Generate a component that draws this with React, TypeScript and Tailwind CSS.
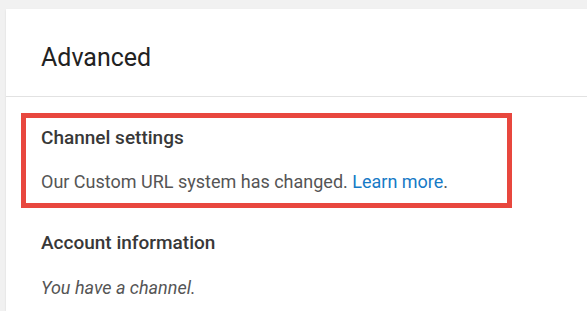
const App: React.FC = () => {
    return (
        <div className="min-h-[311px] w-[587px] overflow-hidden bg-[#f1f1f1] pl-[6px] pt-[9px] font-['Roboto',sans-serif]">
            <div className="min-h-[302px] w-[600px] bg-white shadow-[0_1px_2px_rgba(0,0,0,0.1)]">
                <div className="flex h-[88px] items-center border-b border-[#e2e2e2] pl-[35px] pt-[9px]">
                    <h1 className="text-[25px] font-normal leading-none text-[#222]">Advanced</h1>
                </div>
                <div className="pl-[15px] pt-[16px]">
                    <section className="h-[95px] w-[491px] border-[5px] border-[#e8473e] px-[15px] pt-[7px]">
                        <h2 className="text-[19px] font-medium leading-[26px] text-[#383838]">Channel settings</h2>
                        <p className="mt-[18px] text-[18px] leading-[26px] text-[#555]">
                            Our Custom URL system has changed.{' '}
                            <a href="#" className="text-[#167ac6]">
                                Learn more
                            </a>
                            .
                        </p>
                    </section>
                    <div className="pl-[20px] pt-[22px]">
                        <h2 className="text-[19px] font-medium leading-[26px] text-[#383838]">Account information</h2>
                        <p className="mt-[19px] text-[18px] italic leading-[26px] text-[#555]">You have a channel.</p>
                    </div>
                </div>
            </div>
        </div>
    );
};

export default App;
